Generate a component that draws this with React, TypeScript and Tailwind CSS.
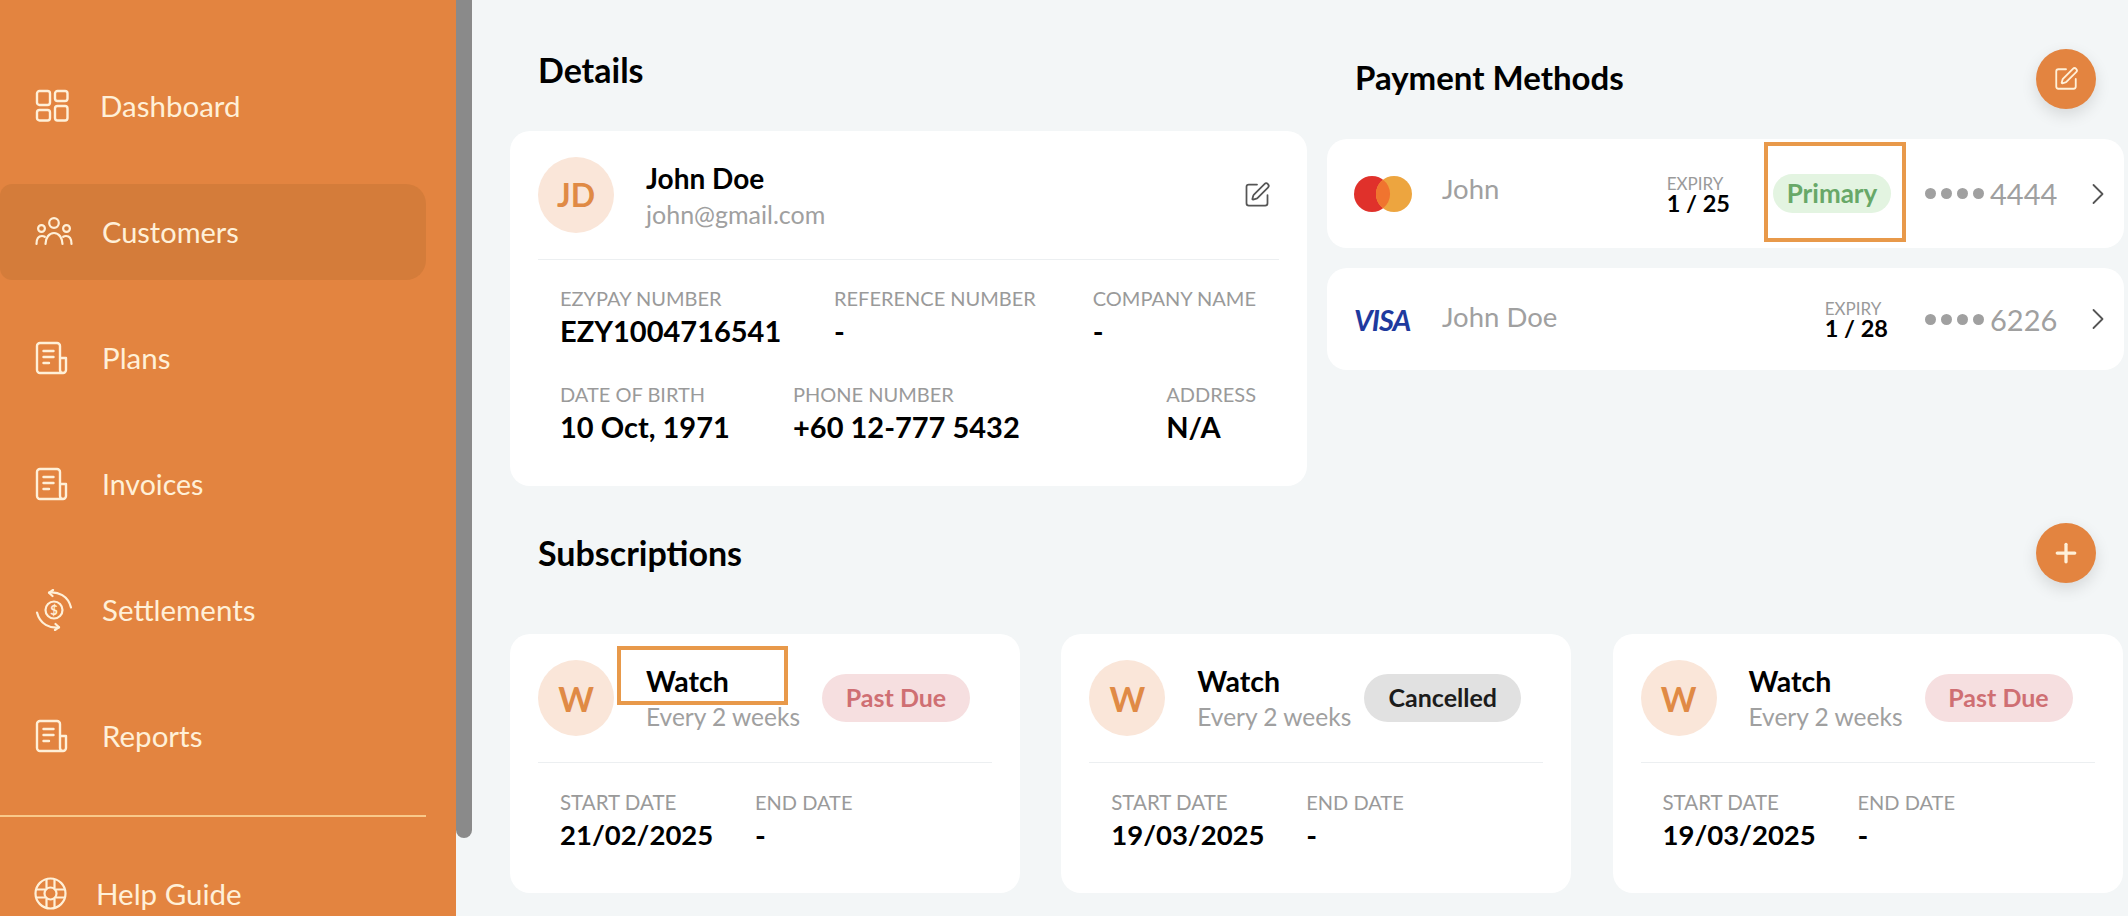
import React from 'react'
import { ChevronRight, Plus, SquarePen } from 'lucide-react'

const DashboardIcon = () => (
  <svg width="34" height="34" viewBox="0 0 34 34" fill="none" stroke="currentColor" strokeWidth="2.4">
    <rect x="2" y="2" width="13" height="14" rx="2.5" />
    <rect x="20" y="2" width="12.5" height="10" rx="2.5" />
    <rect x="2" y="21" width="13" height="10.5" rx="2.5" />
    <rect x="20" y="17" width="12.5" height="14.5" rx="2.5" />
  </svg>
)

const PeopleIcon = () => (
  <svg width="38" height="30" viewBox="0 0 38 30" fill="none" stroke="currentColor" strokeWidth="2.2" strokeLinecap="round">
    <circle cx="19" cy="6" r="4.8" />
    <circle cx="6.5" cy="11.5" r="3.4" />
    <circle cx="31.5" cy="11.5" r="3.4" />
    <path d="M10.5 27c0-6 3.5-11 8.5-11s8.5 5 8.5 11" />
    <path d="M1.5 27c0-4.5 1.8-8 5.5-8 1 0 2 .3 2.8.8" />
    <path d="M36.5 27c0-4.5-1.8-8-5.5-8-1 0-2 .3-2.8.8" />
  </svg>
)

const DocIcon = () => (
  <svg width="34" height="34" viewBox="0 0 34 34" fill="none" stroke="currentColor" strokeWidth="2.4" strokeLinecap="round" strokeLinejoin="round">
    <path d="M28 32H5a3 3 0 0 1-3-3V5a3 3 0 0 1 3-3h17a3 3 0 0 1 3 3v24a3 3 0 0 0 3 3 3 3 0 0 0 3-3V17h-6" />
    <path d="M8.5 10h10M8.5 16h10M8.5 22h5.5" />
  </svg>
)

const SettleIcon = () => (
  <svg width="38" height="42" viewBox="0 0 38 42" fill="none" stroke="currentColor" strokeWidth="2.2" strokeLinecap="round" strokeLinejoin="round">
    <circle cx="19" cy="21" r="8.5" />
    <path d="M14 3.5c9-1 19 3 22 15" />
    <path d="M18 1l-4 2.8 3.5 3.2" />
    <path d="M24 38.5c-9 1-19-3-22-15" />
    <path d="M20 41l4-2.8-3.5-3.2" />
    <text x="19" y="26" textAnchor="middle" fontSize="13" fontWeight="700" fill="currentColor" stroke="none">$</text>
  </svg>
)

const HelpIcon = () => (
  <svg width="33" height="33" viewBox="0 0 33 33" fill="none" stroke="currentColor" strokeWidth="2.2">
    <circle cx="16.5" cy="16.5" r="15" />
    <circle cx="16.5" cy="16.5" r="6" />
    <path d="M12.5 2v9.5M20.5 2v9.5M12.5 21.5V31M20.5 21.5V31M2 12.5h9.5M2 20.5h9.5M21.5 12.5H31M21.5 20.5H31" />
  </svg>
)

const navItems = [
  { label: 'Dashboard', icon: <DashboardIcon />, cls: 'ml-[27px] text-[29.5px]' },
  { label: 'Customers', icon: <PeopleIcon />, cls: 'ml-[29px] text-[29px]', active: true },
  { label: 'Plans', icon: <DocIcon />, cls: 'ml-[29px] text-[29.5px]' },
  { label: 'Invoices', icon: <DocIcon />, cls: 'ml-[29px] text-[28.5px]' },
  { label: 'Settlements', icon: <SettleIcon />, cls: 'ml-[29px] text-[29.5px]' },
  { label: 'Reports', icon: <DocIcon />, cls: 'ml-[29px] text-[29.5px]' },
]

const Field = ({ label, value, narrow }: { label: string; value: string; narrow?: boolean }) => (
  <div className="flex flex-col whitespace-nowrap">
    <span className={`${narrow ? 'text-[20.5px]' : 'text-[20px]'} leading-[26px] text-[#9a9a9a]`}>{label}</span>
    <span className={`${narrow ? 'text-[27.5px]' : 'text-[29px]'} pt-[1px] leading-[38px] font-bold text-black`}>{value}</span>
  </div>
)

const Avatar = ({ text, big }: { text: string; big?: boolean }) => (
  <div className={`${big ? 'text-[34px]' : 'text-[32px]'} flex h-[76px] w-[76px] shrink-0 items-center justify-center rounded-full bg-[#fae6d9] font-bold text-[#e08a45]`}>
    {text}
  </div>
)

const RoundButton = ({ children }: { children: React.ReactNode }) => (
  <div className="flex h-[60px] w-[60px] items-center justify-center rounded-full bg-[#e38440] text-[#fff0d8] shadow-[0_6px_16px_rgba(0,0,0,0.12)]">
    {children}
  </div>
)

const Dots = ({ last }: { last: string }) => (
  <div className="flex items-center text-[#a0a0a0]">
    <div className="flex gap-[5px]">
      {[0, 1, 2, 3].map((d) => (
        <span key={d} className="h-[11px] w-[11px] rounded-full bg-[#a0a0a0]" />
      ))}
    </div>
    <span className="ml-[6px] w-[65px] text-[29px] leading-none">{last}</span>
    <ChevronRight className="ml-[25px] h-[36px] w-[36px] text-[#555]" strokeWidth={1.2} />
  </div>
)

const Expiry = ({ value }: { value: string }) => (
  <div className="flex flex-col">
    <span className="text-[17px] leading-[19px] text-[#9a9a9a]">EXPIRY</span>
    <span className="text-[23.5px] leading-[21px] font-bold text-black">{value}</span>
  </div>
)

const subs = [
  { start: '21/02/2025', status: 'Past Due', badge: 'bg-[#f6dfe0] text-[#cf6f73]', w: 'w-[148px]', outlined: true },
  { start: '19/03/2025', status: 'Cancelled', badge: 'bg-[#e1e1e1] text-[#1c1c1c]', w: 'w-[157px]' },
  { start: '19/03/2025', status: 'Past Due', badge: 'bg-[#f6dfe0] text-[#cf6f73]', w: 'w-[148px]' },
]

export default function App() {
  return (
    <div className="flex h-[916px] w-[2128px] overflow-hidden bg-[#f3f6f7] font-['Lato',sans-serif]">
      {/* Sidebar */}
      <aside className="flex h-full w-[456px] shrink-0 flex-col bg-[#e38440] pt-[58px] text-[#fff0d8]">
        <nav className="flex flex-col gap-[30px]">
          {navItems.map((item) => (
            <div
              key={item.label}
              className={`flex h-[96px] w-[426px] items-center rounded-r-[20px] rounded-l-[12px] pl-[35px] ${item.active ? 'bg-[#d47c3a]' : ''}`}
            >
              <span className="flex w-[38px] justify-start">{item.icon}</span>
              <span className={item.cls}>{item.label}</span>
            </div>
          ))}
        </nav>
        <div className="mt-[31px] h-[2px] w-[426px] bg-[#f9c98a]" />
        <div className="mt-[55px] flex items-center pl-[34px]">
          <HelpIcon />
          <span className="ml-[29px] text-[29.5px]">Help Guide</span>
        </div>
      </aside>

      {/* Scrollbar */}
      <div className="h-full w-[16px] shrink-0">
        <div className="h-[838px] rounded-b-[8px] bg-[#8a8a8a]" />
      </div>

      {/* Main */}
      <main className="flex min-w-0 flex-1 flex-col pl-[38px] pr-[4px]">
        <div className="grid grid-cols-[797px_797px] gap-x-[20px]">
          <section>
            <h2 className="mt-[50px] ml-[28px] text-[34px] leading-[40px] font-bold text-black">Details</h2>
            <div className="mt-[41px] h-[355px] rounded-[20px] bg-white px-[28px] pt-[26px]">
              <div className="flex h-[103px] items-start border-b border-[#eceff1]">
                <Avatar text="JD" />
                <div className="ml-[32px] flex flex-col">
                  <span className="text-[28px] leading-[42px] font-bold text-black">John Doe</span>
                  <span className="text-[25px] leading-[30px] text-[#a0a0a0]">john@gmail.com</span>
                </div>
                <SquarePen className="mt-[24px] ml-auto mr-[8px] h-[28px] w-[28px] text-[#555]" strokeWidth={1.5} />
              </div>
              <div className="flex pl-[22px] pr-[23px] pt-[25px]">
                <div className="w-[274px]"><Field label="EZYPAY NUMBER" value="EZY1004716541" /></div>
                <Field label="REFERENCE NUMBER" value="-" />
                <div className="ml-auto"><Field label="COMPANY NAME" value="-" /></div>
              </div>
              <div className="flex pl-[22px] pr-[23px] pt-[31px]">
                <div className="w-[233px]"><Field label="DATE OF BIRTH" value="10 Oct, 1971" /></div>
                <Field label="PHONE NUMBER" value="+60 12-777 5432" />
                <div className="ml-auto"><Field label="ADDRESS" value="N/A" /></div>
              </div>
            </div>
          </section>

          <section>
            <div className="mt-[49px] flex h-[60px] items-center justify-between pl-[28px] pr-[28px]">
              <h2 className="pb-[2px] text-[33px] font-bold text-black">Payment Methods</h2>
              <RoundButton>
                <SquarePen className="h-[26px] w-[26px]" strokeWidth={1.7} />
              </RoundButton>
            </div>
            <div className="mt-[30px] flex h-[109px] items-center rounded-[20px] bg-white pl-[27px] pr-[8px]">
              <svg width="58" height="36" viewBox="0 0 58 36" className="shrink-0">
                <circle cx="18" cy="18" r="18" fill="#e0312b" />
                <circle cx="40" cy="18" r="18" fill="#eda53f" />
                <path d="M29 3.7a18 18 0 0 1 0 28.6 18 18 0 0 1 0-28.6z" fill="#f0742f" />
              </svg>
              <span className="ml-[30px] mb-[10px] text-[27.5px] text-[#a0a0a0]">John</span>
              <div className="ml-auto"><Expiry value="1 / 25" /></div>
              <span className="relative ml-[43px] mr-[34px] flex h-[39px] w-[118px] items-center justify-center rounded-full bg-[#e3f4e1] text-[26px] font-bold text-[#68a868]">
                Primary
                <span className="absolute left-[-9px] top-[-32px] h-[100px] w-[142px] border-[4px] border-[#e8994a]" />
              </span>
              <Dots last="4444" />
            </div>
            <div className="mt-[20px] flex h-[102px] items-center rounded-[20px] bg-white pl-[27px] pr-[8px]">
              <span className="w-[58px] shrink-0 text-[29px] leading-none font-bold italic tracking-[-1px] text-[#1f3a9e]">VISA</span>
              <span className="ml-[30px] mb-[4px] text-[27.5px] text-[#a0a0a0]">John Doe</span>
              <div className="ml-auto mr-[37px]"><Expiry value="1 / 28" /></div>
              <Dots last="6226" />
            </div>
          </section>
        </div>

        <div className="mt-[37px] flex h-[60px] items-center justify-between pl-[28px] pr-[28px]">
          <h2 className="pb-[2px] text-[34px] font-bold text-black">Subscriptions</h2>
          <RoundButton>
            <Plus className="h-[30px] w-[30px]" strokeWidth={2.6} />
          </RoundButton>
        </div>

        <div className="mt-[51px] flex gap-[41.25px]">
          {subs.map((sub, i) => (
            <div key={i} className="h-[259px] w-[510px] rounded-[20px] bg-white px-[28px] pt-[26px]">
              <div className="flex h-[103px] items-start border-b border-[#eceff1]">
                <Avatar text="W" big />
                <div className="relative ml-[32px] flex flex-col">
                  <span className="text-[28.5px] leading-[42px] font-bold text-black">Watch</span>
                  <span className="text-[24.5px] leading-[29px] whitespace-nowrap text-[#a0a0a0]">Every 2 weeks</span>
                  {sub.outlined && (
                    <span className="absolute left-[-29px] top-[-14px] h-[59px] w-[171px] border-[4px] border-[#e8994a]" />
                  )}
                </div>
                <span className={`${sub.badge} ${sub.w} ml-auto mr-[22px] mt-[14px] flex h-[48px] shrink-0 items-center justify-center rounded-full text-[25px] font-bold`}>
                  {sub.status}
                </span>
              </div>
              <div className="flex pl-[22px] pt-[26px]">
                <div className="w-[195px]"><Field label="START DATE" value={sub.start} narrow /></div>
                <Field label="END DATE" value="-" />
              </div>
            </div>
          ))}
        </div>
      </main>
    </div>
  )
}
